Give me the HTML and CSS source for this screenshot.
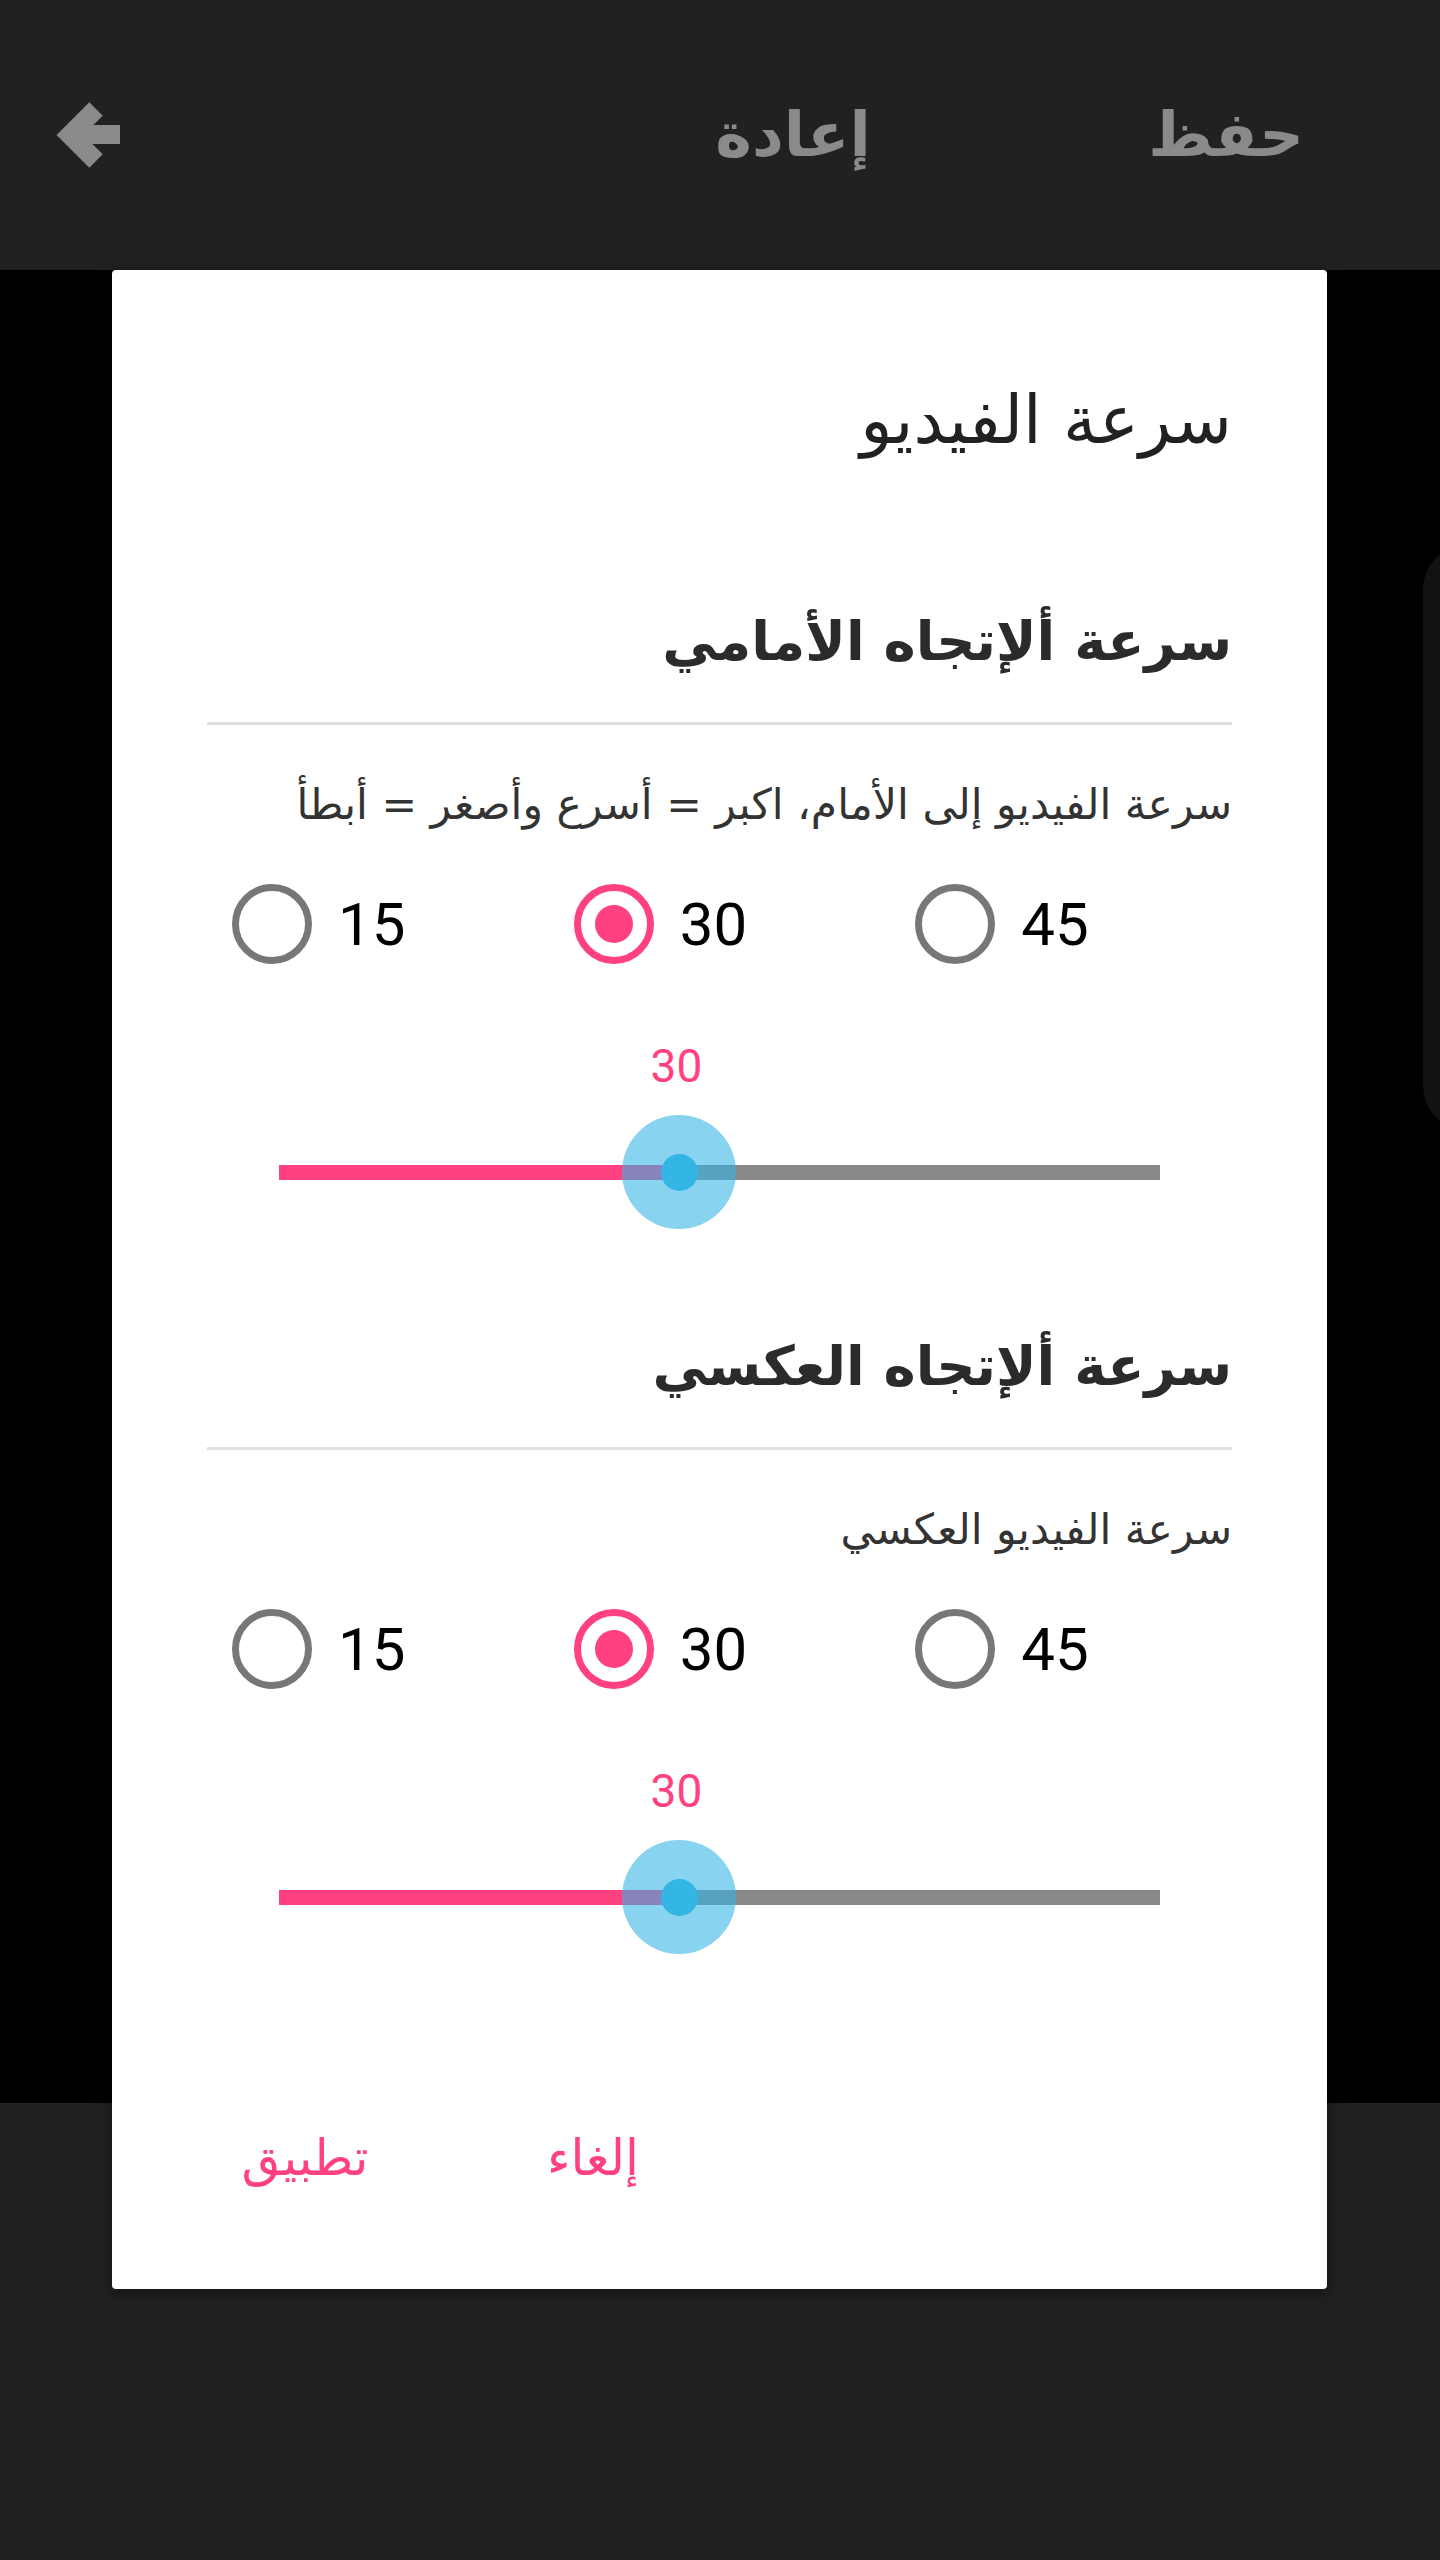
FILE: index.html
```html
<!DOCTYPE html>
<html lang="ar">
<head>
<meta charset="utf-8">
<title>سرعة الفيديو</title>
<link rel="stylesheet" href="styles.css">
</head>
<body>
<div class="screen">
  <header class="topbar">
    <button class="back" aria-label="back">
      <svg width="100" height="90" viewBox="40 90 100 90">
        <polyline points="96,109 70,135 96,161" fill="none" stroke="#8a8a8a" stroke-width="19" stroke-linejoin="miter"/>
        <rect x="78" y="125" width="42" height="19" fill="#8a8a8a"/>
      </svg>
    </button>
    <div class="actions" dir="rtl">
      <span class="action">حفظ</span>
      <span class="action">إعادة</span>
    </div>
  </header>
  <main class="stage">
    <div class="side-panel"></div>
  </main>
  <footer class="bottombar"></footer>

  <div class="dialog" dir="rtl">
    <h1 class="dialog-title">سرعة الفيديو</h1>

    <section class="group">
      <h2 class="group-title">سرعة ألإتجاه الأمامي</h2>
      <div class="divider"></div>
      <p class="group-desc">سرعة الفيديو إلى الأمام، اكبر = أسرع وأصغر = أبطأ</p>
      <div class="radios" dir="ltr">
        <label class="radio"><span class="ring"></span><span class="radio-label">15</span></label>
        <label class="radio checked"><span class="ring"></span><span class="radio-label">30</span></label>
        <label class="radio"><span class="ring"></span><span class="radio-label">45</span></label>
      </div>
      <div class="slider" dir="ltr">
        <div class="slider-head">
          <span class="slider-value" style="left:45.45%">30</span>
        </div>
        <div class="slider-body">
          <div class="track"><div class="fill" style="width:45.45%"></div></div>
          <div class="thumb" style="left:45.45%"><span class="thumb-dot"></span></div>
        </div>
      </div>
    </section>

    <section class="group">
      <h2 class="group-title">سرعة ألإتجاه العكسي</h2>
      <div class="divider"></div>
      <p class="group-desc">سرعة الفيديو العكسي</p>
      <div class="radios" dir="ltr">
        <label class="radio"><span class="ring"></span><span class="radio-label">15</span></label>
        <label class="radio checked"><span class="ring"></span><span class="radio-label">30</span></label>
        <label class="radio"><span class="ring"></span><span class="radio-label">45</span></label>
      </div>
      <div class="slider" dir="ltr">
        <div class="slider-head">
          <span class="slider-value" style="left:45.45%">30</span>
        </div>
        <div class="slider-body">
          <div class="track"><div class="fill" style="width:45.45%"></div></div>
          <div class="thumb" style="left:45.45%"><span class="thumb-dot"></span></div>
        </div>
      </div>
    </section>

    <div class="buttons">
      <span class="btn">إلغاء</span>
      <span class="btn">تطبيق</span>
    </div>
  </div>
</div>
</body>
</html>
```

FILE: styles.css
```css
* { box-sizing: border-box; }
html, body { margin: 0; padding: 0; }
body {
  background: #000;
  font-family: "DejaVu Sans", sans-serif;
}
.screen {
  position: relative;
  width: 1440px;
  height: 2560px;
  display: flex;
  flex-direction: column;
  overflow: hidden;
}
.topbar {
  height: 270px;
  background: #212121;
  display: flex;
  align-items: center;
  justify-content: space-between;
  padding: 0 64px 0 40px;
  flex: none;
}
.back {
  border: 0;
  background: none;
  padding: 0;
  width: 100px;
  height: 90px;
  display: block;
}
.back svg { display: block; }
.actions {
  display: flex;
  align-items: center;
}
.action {
  width: 300px;
  text-align: center;
  color: #8a8a8a;
  font-weight: bold;
  font-size: 62px;
  line-height: 100px;
}
.action + .action { margin-right: 133px; }

.stage {
  position: relative;
  height: 1833px;
  background: #000;
  flex: none;
}
.side-panel {
  position: absolute;
  left: 1423px;
  top: 275px;
  width: 120px;
  height: 585px;
  background: #121212;
  border-radius: 44px;
}
.bottombar {
  flex: 1;
  background: #212121;
}

.dialog {
  position: absolute;
  left: 112px;
  top: 270px;
  width: 1215px;
  background: #fff;
  border-radius: 4px;
  padding: 100px 95px 81px;
  box-shadow: 0 4px 16px rgba(0,0,0,0.5);
}
.dialog-title {
  margin: 0 0 121px;
  font-weight: normal;
  font-size: 67px;
  line-height: 100px;
  color: #212121;
  height: 100px;
}
.group { height: 725px; }
.group-title {
  margin: 0;
  font-size: 54.5px;
  font-weight: bold;
  line-height: 100px;
  height: 100px;
  color: #2b2b2b;
}
.divider {
  margin-top: 31px;
  height: 3px;
  background: #e0e0e0;
}
.group-desc {
  margin: 45px 0 0;
  font-size: 42.5px;
  line-height: 70px;
  height: 70px;
  color: #333;
}
.radios {
  margin-top: 29px;
  height: 110px;
  display: grid;
  grid-template-columns: repeat(3, 1fr);
}
.radio {
  display: flex;
  align-items: center;
  padding-left: 25px;
}
.ring {
  width: 80px;
  height: 80px;
  border-radius: 50%;
  border: 7px solid #777;
  display: flex;
  align-items: center;
  justify-content: center;
  flex: none;
}
.radio.checked .ring { border-color: #ff4081; }
.radio.checked .ring::after {
  content: "";
  width: 38px;
  height: 38px;
  border-radius: 50%;
  background: #ff4081;
}
.radio-label {
  margin-left: 26px;
  font-family: Roboto, "Liberation Sans", sans-serif;
  font-size: 60px;
  color: #000;
}

.slider {
  height: 337px;
  padding: 62px 72px 87px;
}
.slider-head {
  position: relative;
  height: 50px;
}
.slider-value {
  position: absolute;
  top: 0;
  transform: translateX(-50%);
  margin-left: -3px;
  font-family: Roboto, "Liberation Sans", sans-serif;
  font-size: 46px;
  line-height: 50px;
  color: #ff4081;
}
.slider-body {
  position: relative;
  margin-top: 24px;
  height: 114px;
  display: flex;
  align-items: center;
}
.track {
  width: 100%;
  height: 15px;
  background: #888;
}
.fill {
  height: 100%;
  background: #ff4081;
}
.thumb {
  position: absolute;
  top: 0;
  width: 114px;
  height: 114px;
  margin-left: -57px;
  border-radius: 50%;
  background: rgba(51, 181, 229, 0.59);
  display: flex;
  align-items: center;
  justify-content: center;
}
.thumb-dot {
  width: 37px;
  height: 37px;
  border-radius: 50%;
  background: #33b5e5;
}

.buttons {
  margin-top: 67px;
  height: 100px;
  display: flex;
  justify-content: flex-end;
  margin-right: -95px;
  margin-left: -2px;
}
.btn {
  width: 200px;
  text-align: center;
  font-size: 50px;
  line-height: 100px;
  color: #ff4081;
}
.btn + .btn { margin-right: 88px; }
```
